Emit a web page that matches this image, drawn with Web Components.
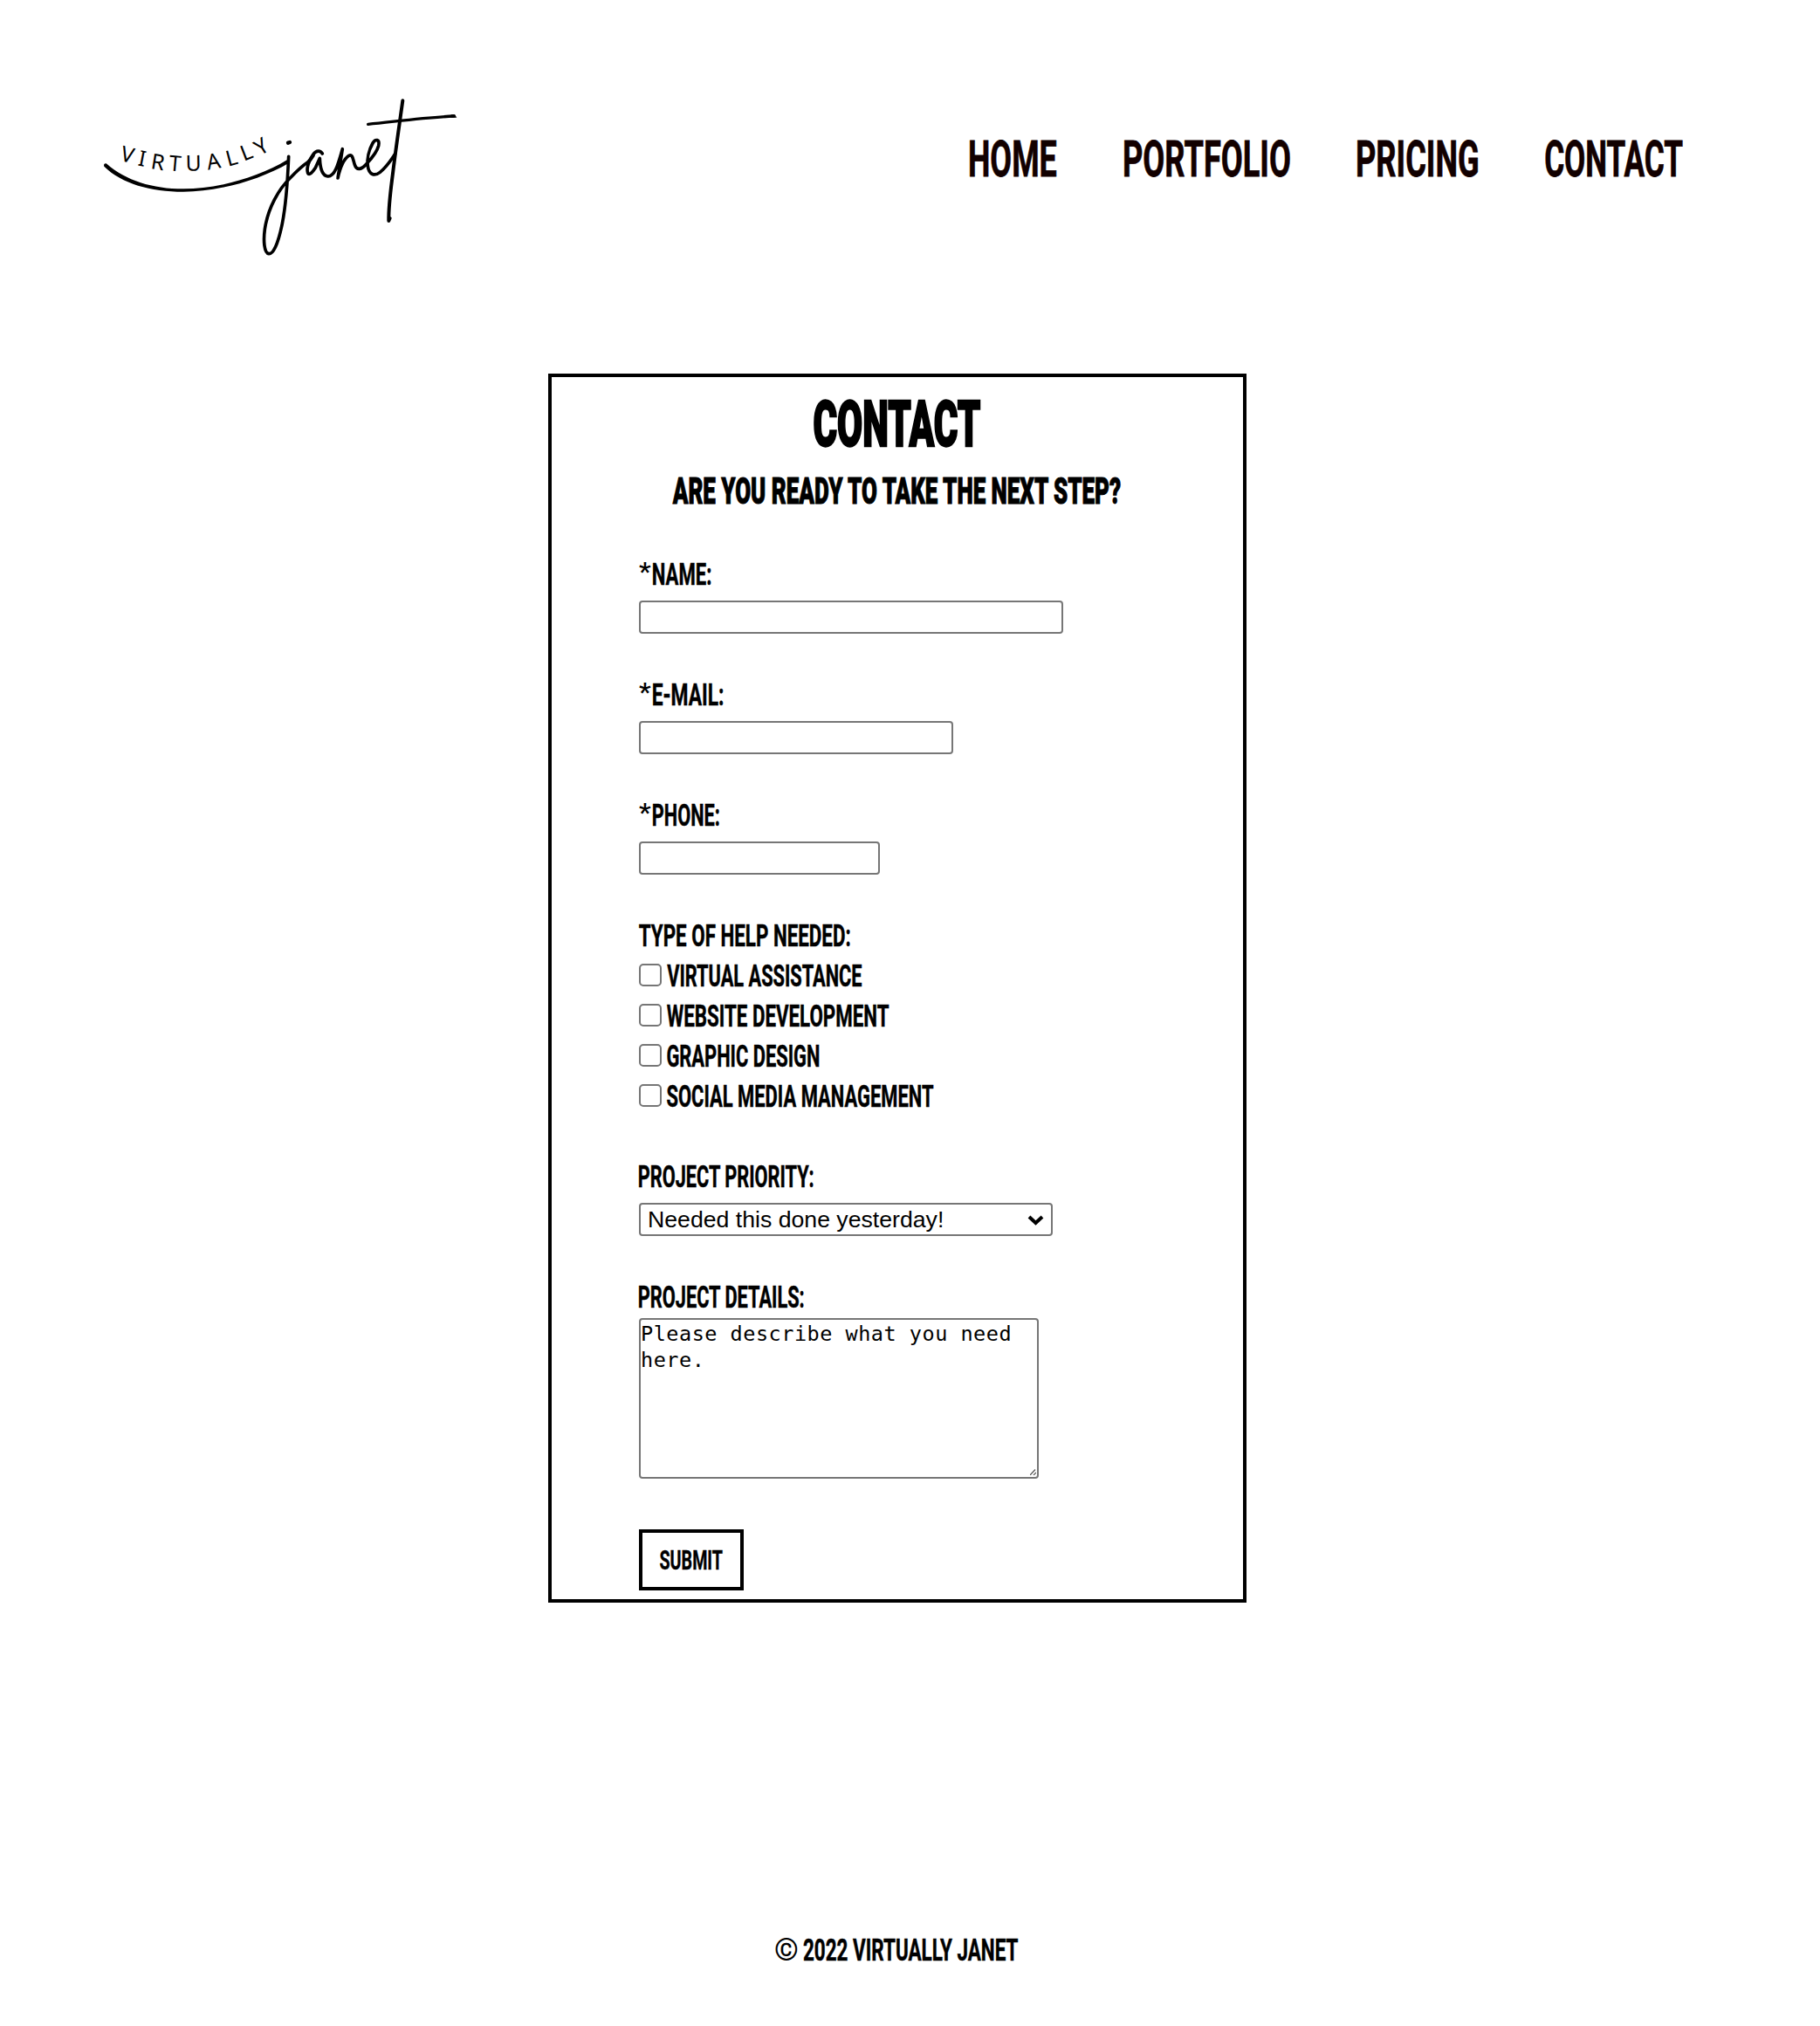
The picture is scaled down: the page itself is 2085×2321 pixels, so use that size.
<!DOCTYPE html>
<html lang="en">
<head>
<meta charset="utf-8">
<title>Virtually Janet - Contact</title>
<style>
html,body{margin:0;background:#fff;color:#000;font-family:Roboto,sans-serif}
</style>
</head>
<body>
<vj-page></vj-page>
<script>
const define=(name,html,setup)=>{
  const t=document.createElement('template');t.innerHTML=html;
  customElements.define(name,class extends HTMLElement{
    connectedCallback(){
      if(this.shadowRoot)return;
      this.attachShadow({mode:'open'}).append(t.content.cloneNode(true));
      if(setup)setup(this,this.shadowRoot);
    }
  });
};
const pen=document.createElement('canvas').getContext('2d');
const measure=(words,weight)=>{
  pen.font=weight+' 1000px Roboto, sans-serif';
  const m=pen.measureText(words);
  return {l:m.actualBoundingBoxLeft/1000,r:m.actualBoundingBoxRight/1000,a:m.actualBoundingBoxAscent/1000,d:m.actualBoundingBoxDescent/1000};
};

/* Condensed capitals: fills a box of width w and cap height cap.
   lead="w h rest" sets the first character in its own lighter box, the remaining text starting at x = rest. */
define('vj-caps',`<style>:host{display:block;flex:none}svg{display:block;overflow:visible}text{font-family:Roboto,sans-serif;fill:currentColor;stroke:currentColor;stroke-linejoin:miter;white-space:pre}.lead{stroke:none}</style><svg><text class="lead"></text><text class="main"></text></svg>`,(host,root)=>{
  const w=+host.getAttribute('w'),cap=+host.getAttribute('cap'),weight=host.getAttribute('weight')||'700',bold=+(host.getAttribute('bold')||0);
  let words=host.textContent.trim(),start=0;
  const svg=root.querySelector('svg'),text=root.querySelector('.main'),lead=root.querySelector('.lead');
  svg.setAttribute('width',w);svg.setAttribute('height',cap);
  if(host.hasAttribute('lead')){
    const [lw,lh,rest]=host.getAttribute('lead').split(' ').map(Number),lm=measure(words[0],'500');
    const ls=lh/(lm.a+lm.d),lk=lw/((lm.l+lm.r)*ls);
    lead.textContent=words[0];
    lead.setAttribute('font-size',ls);lead.setAttribute('font-weight','500');
    lead.setAttribute('transform','translate('+lm.l*ls*lk+' '+lm.a*ls+') scale('+lk+' 1)');
    words=words.slice(1).trim();start=rest;
  }else lead.remove();
  const size=(cap-bold)/0.711,m=measure(words,weight);
  const left=m.l*size+bold/2,k=(w-start)/(left+m.r*size+bold/2);
  text.textContent=words;
  text.setAttribute('font-size',size);text.setAttribute('font-weight',weight);text.setAttribute('stroke-width',bold);
  text.setAttribute('transform','translate('+(start+left*k)+' '+(cap-bold/2)+') scale('+k+' 1)');
});

define('vj-logo',`<style>:host{display:block;width:440px;height:210px;flex:none}svg{display:block}path{fill:none;stroke:#000;stroke-linecap:round;stroke-linejoin:round;stroke-width:11}text{font:400 74px "Noto Sans",sans-serif}</style>
<svg width="440" height="210" viewBox="0 0 1320 630">
<text x="110 172 216 279 338 415 484 538 594" y="251 268 279 286 287 284 272 254 236" rotate="14 11 9 5 -1 -10 -15 -21 -32">VIRTUALLY</text>
<path style="stroke:none;fill:#000" d="M67 263C132 320 225 349 330 349C450 349 590 309 686 250L693 260C592 319 450 359 330 359C218 359 118 331 58 272C55 265 60 260 67 263Z"/>
<path d="M692 238C689 310 684 405 668 478C657 529 641 574 624 572C607 569 605 525 610 488C621 414 658 349 700 309C720 288 742 268 757 258C766 252 772 243 777 234"/>
<path d="M690 191L696 189" style="stroke-width:13"/>
<path d="M808 228C801 216 787 216 777 230C762 250 752 278 758 295C762 305 775 291 784 277L799 244C800 274 807 304 827 306C849 307 860 273 877 212L861 312C869 276 881 247 899 235C912 228 913 248 919 266C926 288 944 282 957 266C970 252 994 228 1001 201C1006 178 990 176 981 192C968 215 960 247 964 271C968 302 988 306 1006 292C1030 273 1045 248 1058 229"/>
<path d="M1084 46C1074 119 1061 206 1051 288C1044 345 1035 403 1036 459L1040 450" style="stroke-width:12"/>
<path d="M965 127C1065 117 1165 103 1261 99" style="stroke-width:10"/><path d="M1250 94L1263 94L1270 104L1250 104Z" style="stroke:none;fill:#000"/>
</svg>`);

define('vj-nav',`<style>:host{display:flex;color:#120000;gap:77px}</style><slot></slot>`);

define('vj-header',`<style>:host{display:flex;justify-content:space-between;align-items:flex-start;padding:100px 156.7px 0 100px;height:428px;box-sizing:border-box}vj-nav{margin-top:60px}</style>
<vj-logo></vj-logo>
<vj-nav>
<vj-caps w="99.5" cap="42" bold=".8">HOME</vj-caps>
<vj-caps w="190" cap="42" bold=".8">PORTFOLIO</vj-caps>
<vj-caps w="138.5" cap="42" bold=".8">PRICING</vj-caps>
<vj-caps w="158" cap="42" bold=".8">CONTACT</vj-caps>
</vj-nav>`);

define('vj-field',`<style>:host{display:flex;flex-direction:column;align-items:flex-start;gap:18px;margin-bottom:56px}</style><slot></slot>`);

define('vj-check',`<style>:host{display:flex;gap:5.5px;height:26px;align-items:center}input{appearance:none;margin:0;width:26px;height:26px;box-sizing:border-box;border:2px solid #767676;border-radius:5px;background:#fff}</style><input type="checkbox"><slot></slot>`);

define('vj-form',`<style>
:host{display:flex;flex-direction:column;width:800px;height:1408px;box-sizing:border-box;border:4px solid #000;margin-left:628px;padding:26px 0 0}
.title{align-self:center;display:flex;flex-direction:column;align-items:center;gap:34px}
form{display:flex;flex-direction:column;align-items:flex-start;padding:67px 0 0 100px}
input,select,textarea{box-sizing:border-box;height:38px;margin:0;border:2px solid #767676;border-radius:4px;background:#fff;color:#000;outline:0}
.checks{display:flex;flex-direction:column;gap:20px;margin-bottom:66px}
.select{display:grid;width:474px;height:38px}
.select>*{grid-area:1/1}
select{appearance:none;width:474px;padding:0 8px;font:26.67px "Liberation Sans",Arial,sans-serif;line-height:32px}
.select svg{justify-self:end;align-self:center;margin-right:10px;pointer-events:none}
textarea{display:block;width:458px;height:184px;padding:1px 0 0;font:23.5px/30px "DejaVu Sans Mono",monospace;letter-spacing:.51px;resize:none;overflow:hidden}
.area{display:grid;margin-bottom:2px}.area>*{grid-area:1/1}.area svg{align-self:end;justify-self:end;margin:0 3px 4px 0}
button{display:flex;align-items:center;justify-content:center;width:120px;height:70px;border:4px solid #000;background:#fff;padding:0 0 2px;margin:0;color:#000}
</style>
<div class="title"><vj-caps w="192" cap="54" weight="900" bold="2.4">CONTACT</vj-caps><vj-caps w="517" cap="31" weight="900" bold="1">ARE YOU READY TO TAKE THE NEXT STEP?</vj-caps></div>
<form>
<vj-field><vj-caps w="82.5" cap="26" bold=".5" lead="13.5 13 16">*NAME:</vj-caps><input style="width:486px" aria-label="Name"></vj-field>
<vj-field><vj-caps w="96.5" cap="26" bold=".5" lead="13.5 13 16">*E-MAIL:</vj-caps><input style="width:360px" aria-label="E-mail"></vj-field>
<vj-field><vj-caps w="92" cap="26" bold=".5" lead="13.5 13 16">*PHONE:</vj-caps><input style="width:276px" aria-label="Phone"></vj-field>
<div class="checks"><vj-caps w="242" cap="26" bold=".5">TYPE OF HELP NEEDED:</vj-caps>
<vj-check><vj-caps w="223.5" cap="26" bold=".5">VIRTUAL ASSISTANCE</vj-caps></vj-check>
<vj-check><vj-caps w="254.5" cap="26" bold=".5">WEBSITE DEVELOPMENT</vj-caps></vj-check>
<vj-check><vj-caps w="174.5" cap="26" bold=".5">GRAPHIC DESIGN</vj-caps></vj-check>
<vj-check><vj-caps w="305.5" cap="26" bold=".5">SOCIAL MEDIA MANAGEMENT</vj-caps></vj-check></div>
<vj-field><vj-caps w="200.5" cap="26" bold=".5">PROJECT PRIORITY:</vj-caps><div class="select"><select aria-label="Priority"><option>Needed this done yesterday!</option></select><svg width="19" height="13" viewBox="0 0 19 13"><path d="M2 3L9.5 10L17 3" fill="none" stroke="#000" stroke-width="4"/></svg></div></vj-field>
<vj-field style="gap:12px"><vj-caps w="189.5" cap="26" bold=".5">PROJECT DETAILS:</vj-caps><div class="area"><textarea aria-label="Details">Please describe what you need here.</textarea><svg width="7" height="7" viewBox="0 0 7 7"><path d="M0 7L6 .5M4 7L7 4" stroke="#555" stroke-width="1.2"/></svg></div></vj-field>
<button type="button"><vj-caps w="72" cap="23" bold=".4">SUBMIT</vj-caps></button>
</form>`);

define('vj-footer',`<style>:host{display:flex;padding:384px 0 75px 888px}</style><vj-caps w="278.5" cap="26" bold=".5" lead="25.5 26.5 32.5">© 2022 VIRTUALLY JANET</vj-caps>`);

define('vj-page',`<style>:host{display:block;height:2321px;overflow:hidden}</style><vj-header></vj-header><vj-form></vj-form><vj-footer></vj-footer>`);
</script>
</body>
</html>
